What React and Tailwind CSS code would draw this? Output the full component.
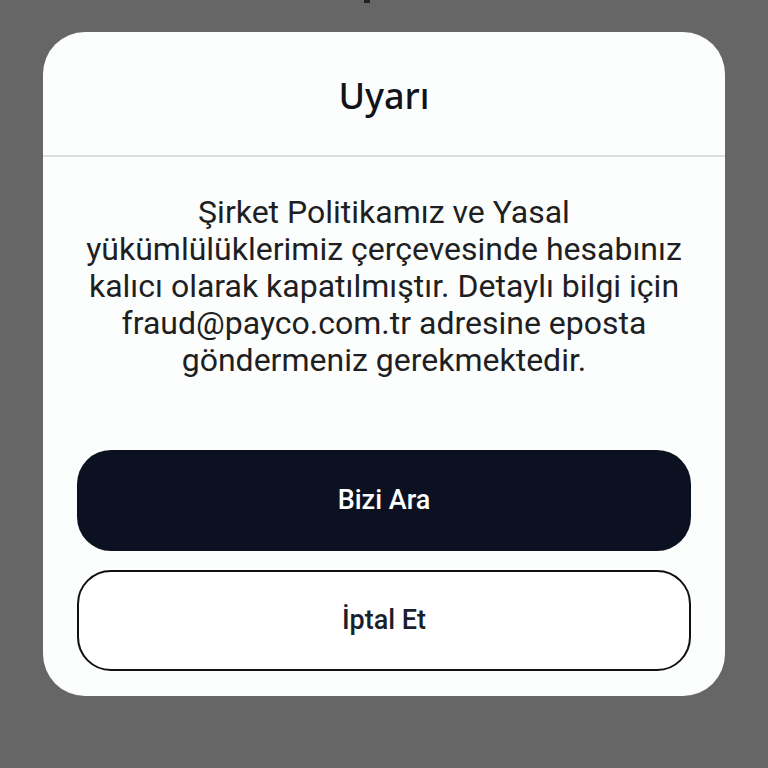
export default function App() {
  return (
    <div className="w-[768px] h-[768px] bg-[#666666] relative overflow-hidden flex justify-center">
      <div className="absolute left-[364px] top-0 w-[6px] h-[3px] bg-[#222]" />
      <div className="mt-[32px] w-[682px] h-[664px] bg-[#fcfdfd] rounded-[42px] flex flex-col">
        <div className="h-[125px] flex items-center justify-center border-b-2 border-[#dedfe0]">
          <h1 className="text-[36px] font-medium text-[#111318] font-['Noto_Sans',sans-serif] leading-none pt-1">
            Uyarı
          </h1>
        </div>
        <p className="mt-[37px] px-[38px] text-center text-[32px] leading-[37px] text-[#1e1f22] font-['Roboto',sans-serif]">
          Şirket Politikamız ve Yasal yükümlülüklerimiz çerçevesinde hesabınız kalıcı olarak kapatılmıştır. Detaylı bilgi için fraud@payco.com.tr adresine eposta göndermeniz gerekmektedir.
        </p>
        <div className="mt-auto px-[34px] pb-[25px] flex flex-col gap-[19px]">
          <button className="h-[101px] rounded-[34px] bg-[#0b1120] text-white text-[27px] font-medium font-['Roboto',sans-serif]">
            Bizi Ara
          </button>
          <button className="h-[101px] rounded-[34px] border-2 border-[#111] bg-white text-[#1a1f2e] text-[27px] font-medium font-['Roboto',sans-serif]">
            İptal Et
          </button>
        </div>
      </div>
    </div>
  );
}
